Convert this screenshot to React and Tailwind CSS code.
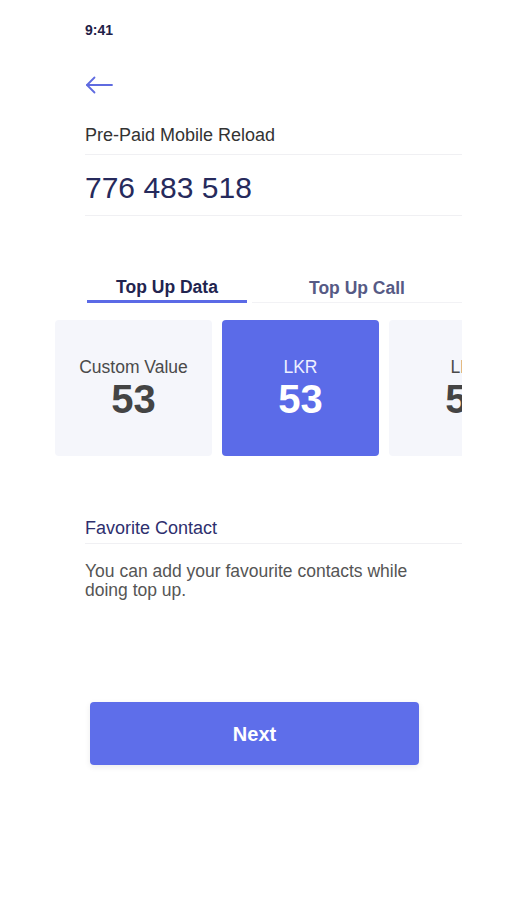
import React from "react";

const amounts = [
  { label: "Custom Value", value: "53", active: false },
  { label: "LKR", value: "53", active: true },
  { label: "LKR", value: "53", active: false },
];

export default function App() {
  return (
    <div className="min-h-[900px] w-[507px] bg-white font-[family-name:Liberation_Sans,Arial,sans-serif]">
      <div className="ml-[85px] w-[377px]">
        <div className="pt-[21px] text-[14px] font-bold leading-[18px] text-[#1f2147]">9:41</div>

        <button className="mt-[36px] block text-[#5f6be0]">
          <svg width="29" height="20" viewBox="0 0 29 20" fill="none" stroke="currentColor" strokeWidth="1.8" strokeLinecap="round" strokeLinejoin="round">
            <path d="M27 10H2" />
            <path d="M9.5 2.5L2 10l7.5 7.5" />
          </svg>
        </button>

        <div className="mt-[30px] border-b border-[#f0f0f3] pb-[9px] text-[18px] leading-[20px] text-[#333333]">
          Pre-Paid Mobile Reload
        </div>
        <div className="border-b border-[#f0f0f3] pt-[15px] pb-[9px] text-[30px] leading-[36px] text-[#262a5c]">
          776 483 518
        </div>

        <div className="mt-[61px] flex items-end">
          <div className="ml-[2px] w-[160px] border-b-[3px] border-[#5b6ae6] pb-[3px] text-center text-[17.5px] font-bold leading-[20px] text-[#22244f]">
            Top Up Data
          </div>
          <div className="ml-[5px] flex-1 border-b border-[#f2f2f5] pb-[4px] text-center text-[17.5px] font-bold leading-[20px] text-[#565a85]">
            Top Up Call
          </div>
        </div>

        <div className="-ml-[30px] mt-[17px] flex w-[407px] gap-[10px] overflow-hidden">
          {amounts.map((a, i) => (
            <div
              key={i}
              className={
                a.active
                  ? "flex h-[136px] w-[157px] shrink-0 flex-col items-center justify-center rounded-[4px] bg-[#5b6be8] text-white"
                  : "flex h-[136px] w-[157px] shrink-0 flex-col items-center justify-center rounded-[4px] bg-[#f5f6fb] text-[#444444]"
              }
            >
              <div className={a.active ? "text-[17.5px] leading-[20px] text-[#eef0ff]" : "text-[17.5px] leading-[20px] text-[#4a4a4a]"}>
                {a.label}
              </div>
              <div className="mt-[1px] text-[40px] font-bold leading-[42px]">{a.value}</div>
            </div>
          ))}
        </div>

        <div className="mt-[62px] border-b border-[#f0f0f3] pb-[5px] text-[18px] leading-[20px] text-[#2e2f6e]">
          Favorite Contact
        </div>
        <p className="mt-[18px] w-[345px] text-[17.5px] leading-[19px] text-[#555555]">
          You can add your favourite contacts while doing top up.
        </p>

        <button className="ml-[5px] mt-[102px] flex h-[63px] w-[329px] items-center justify-center rounded-[4px] bg-[#5e6eea] text-[20px] font-bold text-white shadow-[0_2px_6px_rgba(0,0,0,0.08)]">
          Next
        </button>
      </div>
    </div>
  );
}
